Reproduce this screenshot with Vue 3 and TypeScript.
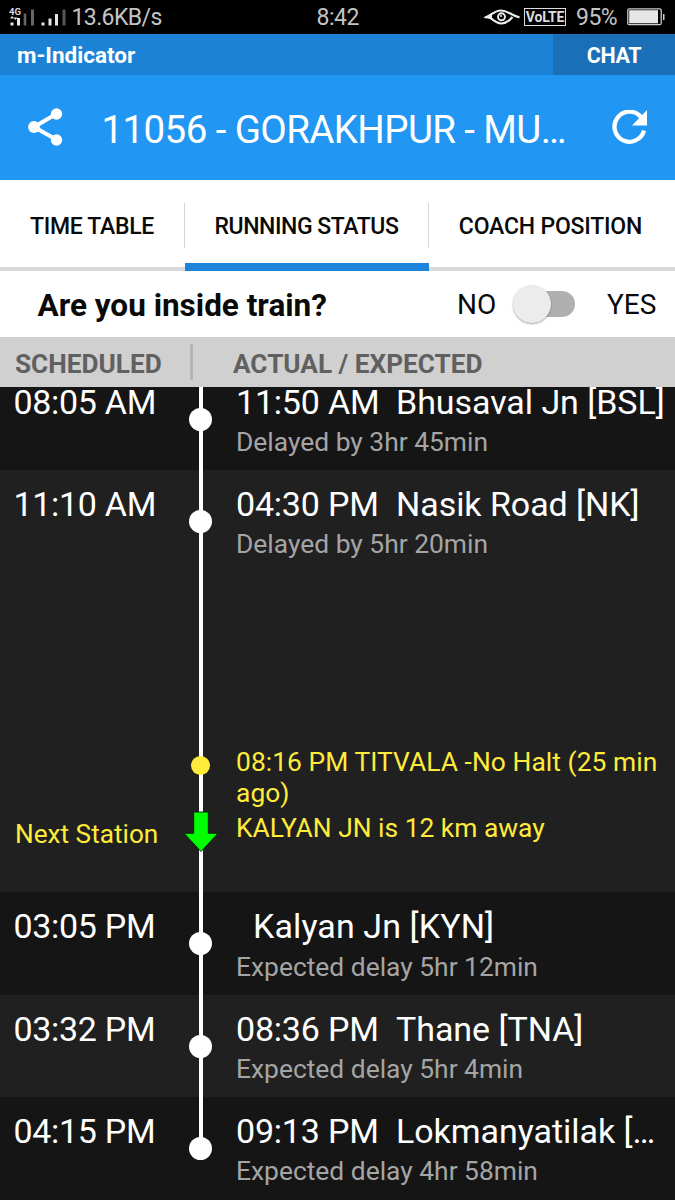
<script setup lang="ts">
interface Stop {
  scheduled: string
  actual: string
  station: string
  delay: string
  kind: 'dark' | 'light'
  first?: boolean
  last?: boolean
  live?: boolean
}

const tabs = ['TIME TABLE', 'RUNNING STATUS', 'COACH POSITION']
const activeTab = 'RUNNING STATUS'

const stops: Stop[] = [
  { scheduled: '08:05 AM', actual: '11:50 AM', station: 'Bhusaval Jn [BSL]', delay: 'Delayed by 3hr 45min', kind: 'dark', first: true },
  { scheduled: '11:10 AM', actual: '04:30 PM', station: 'Nasik Road [NK]', delay: 'Delayed by 5hr 20min', kind: 'light', live: true },
  { scheduled: '03:05 PM', actual: '', station: 'Kalyan Jn [KYN]', delay: 'Expected delay 5hr 12min', kind: 'dark' },
  { scheduled: '03:32 PM', actual: '08:36 PM', station: 'Thane [TNA]', delay: 'Expected delay 5hr 4min', kind: 'light' },
  { scheduled: '04:15 PM', actual: '09:13 PM', station: 'Lokmanyatilak […', delay: 'Expected delay 4hr 58min', kind: 'dark', last: true },
]
</script>

<template>
  <div class="screen">
    <div class="status">
      <svg class="signal" width="60" height="22" viewBox="0 0 60 22">
        <text x="0" y="8.5" class="net">4G</text>
        <path d="M1 12.500l2-2.500 2 2.500zM4.500 11.500h4l-2 2.500zM1.500 16.500h3v3h-3zM8 12h3v7.500H8z" fill="#e6e6e6" />
        <path d="M14.700 7.500h2.600v12h-2.600zM22 3.500h3v16h-3z" fill="#666" />
        <path d="M32.500 16.500h3v3h-3zM39.500 12.500h3v7h-3zM46 8h3v11.500h-3z" fill="#e6e6e6" />
        <path d="M53.500 3.500h3v16h-3z" fill="#555" />
      </svg>
      <span class="speed">13.6KB/s</span>
      <span class="clock">8:42</span>
      <svg class="eye" width="39" height="18" viewBox="0 0 39 18">
        <path d="M2 9.500C8 8 11 2.500 18 2.500c7 0 11 5.500 18.500 6.800M7 9.500c4 3.500 7 6 11.500 6s8-3 11-6.500" fill="none" stroke="#eee" stroke-width="2.200" />
        <path d="M0 9.500 9 6.500v5z" fill="#eee" />
        <circle cx="18.500" cy="8.800" r="3.500" fill="none" stroke="#eee" stroke-width="1.900" />
        <circle cx="18" cy="8" r="1" fill="#eee" />
      </svg>
      <span class="volte">VoLTE</span>
      <span class="percent">95%</span>
      <svg class="battery" width="38" height="18" viewBox="0 0 38 18">
        <rect x=".8" y=".8" width="33.400" height="15.900" rx="1.500" fill="none" stroke="#ccc" stroke-width="1.300" />
        <path d="M2.200 2.200h28.800v13.100H2.200z" fill="#e6e6e6" />
        <path d="M36 6h1.500v6H36z" fill="#ccc" />
      </svg>
    </div>

    <div class="brand">
      <span class="brand-name">m-Indicator</span>
      <span class="chat">CHAT</span>
    </div>

    <header class="titlebar">
      <svg class="share" width="36" height="40" viewBox="0 0 36 40">
        <path d="M29 6.500 6 20l23 13" fill="none" stroke="#fff" stroke-width="4" />
        <circle cx="28.500" cy="7" r="5.700" fill="#fff" />
        <circle cx="6" cy="20" r="5.900" fill="#fff" />
        <circle cx="28.500" cy="33" r="5.700" fill="#fff" />
      </svg>
      <h1>11056 - GORAKHPUR - MU…</h1>
      <svg class="refresh" width="36" height="36" viewBox="0 0 36 36">
        <path d="M29.400 7.600A15 15 0 1 0 32 20.500" fill="none" stroke="#fff" stroke-width="4.300" />
        <path d="M35 0v15.500H20z" fill="#fff" />
      </svg>
    </header>

    <nav class="tabs">
      <span v-for="tab in tabs" :key="tab" class="tab" :class="{ active: tab === activeTab }">
        <b>{{ tab }}</b>
      </span>
    </nav>

    <div class="question">
      <span class="ask">Are you inside train?</span>
      <span class="no">NO</span>
      <span class="switch"><i class="knob"></i></span>
      <span class="yes">YES</span>
    </div>

    <div class="head">
      <span class="head-left">SCHEDULED</span>
      <i class="bar"></i>
      <span class="head-right">ACTUAL / EXPECTED</span>
    </div>

    <main class="list">
      <section v-for="stop in stops" :key="stop.station" class="row" :class="[stop.kind, { first: stop.first, last: stop.last, tall: stop.live }]">
        <div class="scheduled">
          <span class="time">{{ stop.scheduled }}</span>
          <span v-if="stop.live" class="next">Next Station</span>
        </div>
        <div class="rail">
          <i class="dot"></i>
          <template v-if="stop.live">
            <i class="passed"></i>
            <svg class="arrow" width="36" height="42" viewBox="0 0 36 42">
              <path d="M10.700 1h14.600v21.300H35L18 40.500 1 22.300h9.700z" fill="#0f0" stroke="#062b06" stroke-width="1" />
            </svg>
          </template>
        </div>
        <div class="info">
          <div class="station">
            <span v-if="stop.actual" class="actual">{{ stop.actual }}</span>
            <span class="name" :class="{ alone: !stop.actual }">{{ stop.station }}</span>
          </div>
          <div class="delay">{{ stop.delay }}</div>
          <div v-if="stop.live" class="position">
            <p class="passing">08:16 PM TITVALA -No Halt (25 min ago)</p>
            <p class="away">KALYAN JN is 12 km away</p>
          </div>
        </div>
      </section>
    </main>
  </div>
</template>

<style>
body {
  margin: 0;
  background: #151515;
}
</style>

<style scoped>
.screen {
  width: 675px;
  height: 1200px;
  overflow: hidden;
  display: flex;
  flex-direction: column;
  background: #151515;
  font-family: Roboto, "Liberation Sans", sans-serif;
  color: #fff;
  white-space: nowrap;
}
.screen > * { flex-shrink: 0; }
.status {
  height: 34px;
  background: #000;
  display: flex;
  align-items: center;
  color: #c4c4c4;
  font-size: 23px;
  line-height: 34px;
}
.signal { margin-left: 9px; margin-top: -1px; }
.net { font: bold 9.500px Roboto, sans-serif; fill: #ddd; }
.speed { margin-left: 2.500px; width: 245px; letter-spacing: -.6px; padding-top: 1px; }
.clock { width: 166.500px; letter-spacing: -.5px; padding-top: 1px; }
.eye { flex: none; }
.volte {
  margin-left: 2px;
  box-sizing: border-box;
  width: 42px;
  height: 18px;
  border: 1px solid #ddd;
  font-weight: 700;
  font-size: 14px;
  line-height: 17px;
  text-align: center;
  letter-spacing: -.2px;
  color: #ddd;
}
.percent { margin-left: 10px; width: 51px; letter-spacing: -.5px; padding-top: 1px; }
.battery { flex: none; }
.brand {
  height: 41px;
  display: flex;
  background: #1c82d6;
  font-size: 22.500px;
  font-weight: 700;
  line-height: 43px;
}
.brand-name { flex: 1; padding-left: 17px; }
.chat { width: 122px; text-align: center; background: #1a6fb7; font-size: 21.500px; letter-spacing: -.3px; }
.titlebar {
  height: 105px;
  display: flex;
  align-items: center;
  background: #2196f3;
}
.share { margin-left: 28px; margin-top: -1px; }
h1 {
  margin: 4px 0 0 37.500px;
  width: 472px;
  font-size: 38.500px;
  font-weight: 400;
  line-height: 48px;
  letter-spacing: -.6px;
}
.refresh { margin-left: 38.500px; margin-top: 1px; }
.tabs {
  height: 91px;
  display: grid;
  grid-template-columns: 185px 244px 246px;
  background: #fff;
  color: #0a0a0a;
}
.tab {
  box-sizing: border-box;
  padding-top: 23px;
  border-bottom: 4px solid #d9d9d9;
  text-align: center;
  font-size: 23px;
  line-height: 48px;
  letter-spacing: -.3px;
}
.tab b { display: block; height: 45px; font-weight: 500; }
.tab:not(:last-child) b { border-right: 1px solid #d5d5d5; }
.tab.active { border-bottom: 8px solid #1d84d9; letter-spacing: -.45px; }
.tab:last-child b { padding-right: 3px; letter-spacing: -.2px; }
.question {
  height: 66px;
  display: flex;
  align-items: center;
  background: #fff;
  color: #0a0a0a;
  font-size: 28px;
}
.ask { margin: 2px 0 0 37.500px; width: 419.500px; font-size: 31.500px; font-weight: 700; }
.no { width: 62px; padding-top: 1px; }
.switch { width: 56px; height: 26px; border-radius: 13px; background: #b0b0b0; }
.knob {
  display: block;
  width: 38px;
  height: 38px;
  margin: -6px 0 0 -6px;
  border-radius: 50%;
  background: #ececec;
  box-shadow: 0 1px 2px rgba(0, 0, 0, .35);
}
.yes { margin-left: 32px; padding-top: 1px; }
.head {
  height: 50px;
  display: flex;
  align-items: center;
  background: #d0d0d0;
  color: #606060;
  font-size: 26.200px;
  font-weight: 700;
}
.head-left { margin: 3px 0 0 15px; width: 175px; }
.bar { width: 3px; height: 36px; background: #b5b5b5; }
.head-right { margin: 4px 0 0 40px; }
.list { height: 813px; overflow: hidden; }
.row {
  height: 102.300px;
  display: grid;
  grid-template-columns: 184px 33px 458px;
}
.first { margin-top: -19.500px; }
.dark { background: #151515; }
.light { background: #202020; }
.tall { height: 422.500px; }
.scheduled { padding: 14.200px 0 0 13.500px; }
.time {
  display: block;
  font-size: 34px;
  line-height: 40px;
  letter-spacing: -.3px;
}
.next {
  display: block;
  margin: 294.800px 0 0 1.500px;
  font-size: 26.200px;
  line-height: 30px;
  color: #ffeb3b;
}
.rail {
  display: flex;
  flex-direction: column;
  align-items: center;
  background: linear-gradient(#fff, #fff) 15px 0 / 4px 100% no-repeat;
}
.last .rail { background-size: 4px 51px; }
.dot {
  flex: none;
  width: 23px;
  height: 23px;
  margin-top: 40px;
  border-radius: 50%;
  background: #fff;
}
.passed {
  width: 19px;
  height: 19px;
  margin-top: 223.500px;
  border-radius: 50%;
  background: #ffeb3b;
}
.arrow { flex: none; margin: 35.500px -2px 0; }
.info { padding: 14.200px 8px 0 19px; }
.station {
  display: flex;
  font-size: 34px;
  line-height: 40px;
}
.actual { width: 160px; letter-spacing: -.2px; }
.name { letter-spacing: -.05px; }
.alone { margin-left: 17px; letter-spacing: .1px; }
.delay {
  margin-top: 5.300px;
  font-size: 26.400px;
  line-height: 30px;
  color: #a5a5a5;
}
.position {
  margin-top: 188px;
  white-space: normal;
  font-size: 26.400px;
  line-height: 31px;
  color: #ffeb3b;
}
.position p { margin: 0; }
.passing { letter-spacing: .05px; }
.position .away { margin-top: 4px; }
</style>
